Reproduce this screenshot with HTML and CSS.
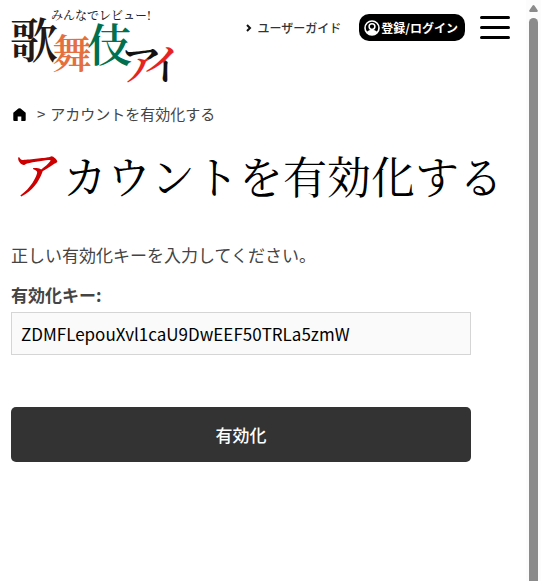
FILE: index.html
```html
<!DOCTYPE html>
<html lang="ja">
<head>
<meta charset="utf-8">
<meta name="viewport" content="width=device-width, initial-scale=1">
<title>アカウントを有効化する</title>
<link rel="stylesheet" href="styles.css">
</head>
<body>
<div class="page">
  <header class="header">
    <a class="logo" href="#">
      <svg width="166" height="76" viewBox="11 8 166 76" role="img" aria-label="みんなでレビュー！歌舞伎アイ">
        <defs>
          <linearGradient id="a-ink" gradientUnits="userSpaceOnUse" x1="132" y1="48" x2="128" y2="82">
            <stop offset=".24" stop-color="#111"/><stop offset=".28" stop-color="#e52320"/>
          </linearGradient>
          <linearGradient id="i-ink" gradientUnits="userSpaceOnUse" x1="154" y1="54" x2="170" y2="70">
            <stop offset=".54" stop-color="#e52320"/><stop offset=".6" stop-color="#111"/>
          </linearGradient>
        </defs>
        <text class="logo-tag" x="51" y="20">みんなでレビュー!</text>
        <text class="logo-ka" x="10" y="58">歌</text>
        <text class="logo-bu" x="52" y="68">舞</text>
        <text class="logo-ki" x="87" y="62">伎</text>
        <text class="logo-kana" x="120" y="80" fill="url(#a-ink)">ア</text>
        <text class="logo-kana" x="142" y="80" fill="url(#i-ink)">イ</text>
      </svg>
    </a>
    <nav class="nav">
      <a class="guide" href="#">
        <svg width="6" height="8" viewBox="0 0 6 8" aria-hidden="true"><path d="M1 1l3 3-3 3" fill="none" stroke="#111" stroke-width="2"/></svg>
        ユーザーガイド
      </a>
      <a class="login" href="#">
        <svg width="16" height="16" viewBox="0 0 16 16" aria-hidden="true">
          <circle cx="8" cy="8" r="7" fill="none" stroke="#fff" stroke-width="1.6"/>
          <circle cx="8" cy="6.6" r="2.900" fill="none" stroke="#fff" stroke-width="1.5"/>
          <path d="M2.500 12Q5 9.800 8 9.800Q11 9.800 13.500 12Q11.500 15 8 15Q4.500 15 2.500 12Z" fill="#fff"/>
        </svg>
        登録/ログイン
      </a>
      <button class="menu" type="button" aria-label="メニュー"><span></span><span></span><span></span></button>
    </nav>
  </header>
  <nav class="crumbs">
    <a class="home" href="#" aria-label="ホーム">
      <svg width="13" height="13" viewBox="0 0 13 13" aria-hidden="true"><path d="M.3 4.800L5.400.6Q6.500-.2 7.600.6L12.700 4.800V12Q12.700 13 11.700 13H8.300V8.500H4.700V13H1.300Q.3 13 .3 12Z"/></svg>
    </a>
    <span>&gt;</span>
    <span>アカウントを有効化する</span>
  </nav>
  <main>
    <h1 class="title">アカウントを有効化する</h1>
    <form class="form">
      <p class="lead">正しい有効化キーを入力してください。</p>
      <label class="label" for="key">有効化キー:</label>
      <input class="field" id="key" type="text" value="ZDMFLepouXvl1caU9DwEEF50TRLa5zmW">
      <button class="submit" type="submit">有効化</button>
    </form>
  </main>
</div>
<div class="rail" aria-hidden="true">
  <svg width="9" height="7" viewBox="0 0 9 7"><path d="M4.500 0Q5 0 5.400.6L8.800 5.600Q9 7 8 7H1Q0 7 .2 5.600L3.600.6Q4 0 4.500 0Z" fill="#8b8b8b"/></svg>
  <div class="thumb"></div>
</div>
</body>
</html>
```
FILE: styles.css
```css
* {
  box-sizing: border-box;
}

body {
  margin: 0;
  display: flex;
  min-height: 100vh;
  background: #fff;
  color: #444;
  font-family: "Noto Sans CJK JP", sans-serif;
  font-size: 17px;
  line-height: 24px;
}

a {
  color: inherit;
  text-decoration: none;
}

.page {
  flex: 1;
  min-width: 0;
  padding: 8px 11px 0;
}

.header {
  display: flex;
  justify-content: space-between;
  align-items: flex-start;
}

.logo svg {
  display: block;
  overflow: visible;
}

.logo text {
  font-family: "Noto Serif CJK JP", "Noto Sans CJK JP", serif;
  font-weight: 600;
}

.logo .logo-tag {
  font-size: 12px;
  font-weight: 500;
  fill: #222;
}

.logo-ka {
  font-size: 48px;
  fill: #231815;
}

.logo-bu {
  font-size: 40px;
  fill: #e5703f;
}

.logo-ki {
  font-size: 45px;
  fill: #00704f;
}

.logo-kana {
  font-size: 42px;
}

.nav {
  display: flex;
  align-items: center;
  padding: 6px 5px 0 0;
  font-size: 12px;
  font-weight: 700;
}

.guide {
  display: flex;
  align-items: center;
  gap: 6px;
  margin-right: 18px;
  font-weight: 500;
  color: #333;
}

.login {
  display: flex;
  align-items: center;
  gap: 1px;
  height: 27px;
  padding: 0 7px 0 5px;
  margin-right: 15px;
  border-radius: 10px;
  background: #000;
  color: #fff;
}

.menu {
  display: flex;
  flex-direction: column;
  gap: 7px;
  width: 30px;
  padding: 0;
  border: 0;
  background: none;
}

.menu span {
  width: 100%;
  height: 3px;
  border-radius: 2px;
  background: #000;
}

.crumbs {
  display: flex;
  align-items: center;
  gap: 5px;
  margin-top: 18px;
  padding-left: 2px;
  font-size: 15px;
}

.home {
  display: flex;
  margin-right: 6px;
}

.title {
  margin: 10px 0 0;
  color: #000;
  font-family: "Noto Serif CJK JP", "Noto Sans CJK JP", serif;
  font-size: 44px;
  font-weight: 400;
  line-height: 72px;
}

.title::first-letter {
  color: #c00;
  font-size: 52px;
  font-weight: 500;
}

.form {
  display: flex;
  flex-direction: column;
  padding: 32px 44px 0 0;
}

.lead {
  margin: 0 0 16px;
}

.label {
  margin-bottom: 5px;
  font-weight: 700;
}

.field {
  width: 100%;
  height: 43px;
  padding: 0 9px;
  border: 1px solid #d5d5d5;
  border-radius: 0;
  background: #fafafa;
  color: #000;
  font: inherit;
}

.submit {
  height: 55px;
  margin-top: 52px;
  border: 0;
  border-radius: 5px;
  background: #333;
  color: #fff;
  font: inherit;
  font-weight: 500;
}

.rail {
  display: flex;
  flex-direction: column;
  align-items: center;
  gap: 6px;
  width: 15px;
  padding-top: 5px;
  background: #fcfcfc;
}

.thumb {
  flex: 1;
  width: 9px;
  border-radius: 5px 5px 0 0;
  background: #8b8b8b;
}
```
